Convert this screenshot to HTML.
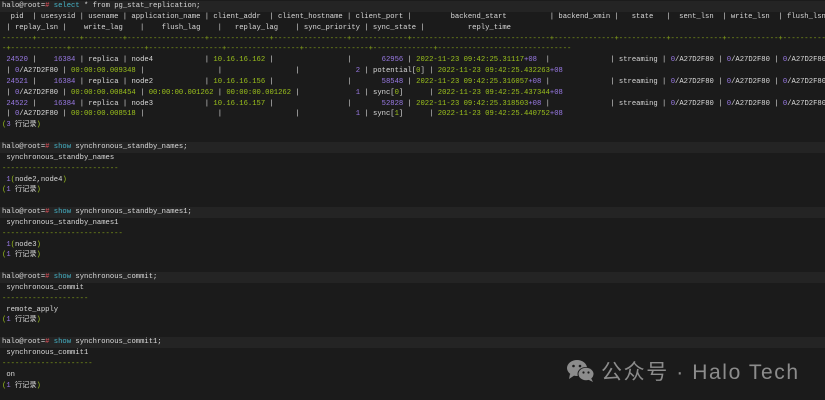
<!DOCTYPE html>
<html><head><meta charset="utf-8"><style>
html,body{margin:0;padding:0;background:#1b1b1b;width:825px;height:400px;overflow:hidden}
pre{margin:0;padding:1px 0 0 2px;font-family:"Liberation Mono","Noto Sans CJK SC",monospace;font-size:7.2px;line-height:10.85px;color:#dadada;white-space:pre;overflow:hidden;width:823px}
.l{display:block;height:10.85px;overflow:hidden}
.p{background:#242424;width:825px;margin-left:-2px;padding-left:2px}
.r{color:#e0505a}.k{color:#45b4c8}.g{color:#9cc21c}.d{color:#8aa818}.u{color:#9a7ae6}
.wm{position:absolute;left:566px;top:356px;display:flex;align-items:center;color:#8c8c8c;font-family:"Liberation Sans","Noto Sans CJK SC",sans-serif;font-size:21px;letter-spacing:1.6px}
</style></head><body>
<pre><span class="l p">halo@root=<span class="r">#</span> <span class="k">select</span> * from pg_stat_replication;</span><span class="l">  pid  | usesysid | usename | application_name | client_addr  | client_hostname | client_port |         backend_start          | backend_xmin |   state   |  sent_lsn  | write_lsn  | flush_lsn</span><span class="l"> | replay_lsn |    write_lag    |    flush_lag    |   replay_lag    | sync_priority | sync_state |          reply_time</span><span class="l d">-------+----------+---------+------------------+--------------+-----------------+-------------+--------------------------------+--------------+-----------+------------+------------+-----------</span><span class="l d">-+-------------+-----------------+-----------------+-----------------+---------------+--------------+-------------------------------</span><span class="l"> <span class="u">24520</span> |    <span class="u">16384</span> | replica | node4            | <span class="g">10.16.16.162</span> |                 |       <span class="u">62956</span> | <span class="g">2022-11-23 09:42:25.31117</span><span class="u">+08</span>  |              | streaming | <span class="u">0</span>/A27D2F80 | <span class="u">0</span>/A27D2F80 | <span class="u">0</span>/A27D2F80</span><span class="l"> | <span class="u">0</span>/A27D2F80 | <span class="g">00:00:00.009348</span> |                 |                 |             <span class="u">2</span> | potential[<span class="g">0</span>] | <span class="g">2022-11-23 09:42:25.432263</span><span class="u">+08</span></span><span class="l"> <span class="u">24521</span> |    <span class="u">16384</span> | replica | node2            | <span class="g">10.16.16.156</span> |                 |       <span class="u">58548</span> | <span class="g">2022-11-23 09:42:25.316057</span><span class="u">+08</span> |              | streaming | <span class="u">0</span>/A27D2F80 | <span class="u">0</span>/A27D2F80 | <span class="u">0</span>/A27D2F80</span><span class="l"> | <span class="u">0</span>/A27D2F80 | <span class="g">00:00:00.008454</span> | <span class="g">00:00:00.001262</span> | <span class="g">00:00:00.001262</span> |             <span class="u">1</span> | sync[<span class="g">0</span>]      | <span class="g">2022-11-23 09:42:25.437344</span><span class="u">+08</span></span><span class="l"> <span class="u">24522</span> |    <span class="u">16384</span> | replica | node3            | <span class="g">10.16.16.157</span> |                 |       <span class="u">52828</span> | <span class="g">2022-11-23 09:42:25.318503</span><span class="u">+08</span> |              | streaming | <span class="u">0</span>/A27D2F80 | <span class="u">0</span>/A27D2F80 | <span class="u">0</span>/A27D2F80</span><span class="l"> | <span class="u">0</span>/A27D2F80 | <span class="g">00:00:00.008518</span> |                 |                 |             <span class="u">1</span> | sync[<span class="g">1</span>]      | <span class="g">2022-11-23 09:42:25.440752</span><span class="u">+08</span></span><span class="l"><span class="g">(</span><span class="u">3</span> 行记录<span class="g">)</span></span><span class="l"> </span><span class="l p">halo@root=<span class="r">#</span> <span class="k">show</span> synchronous_standby_names;</span><span class="l"> synchronous_standby_names</span><span class="l d">---------------------------</span><span class="l"> <span class="u">1</span><span class="g">(</span>node2,node4<span class="g">)</span></span><span class="l"><span class="g">(</span><span class="u">1</span> 行记录<span class="g">)</span></span><span class="l"> </span><span class="l p">halo@root=<span class="r">#</span> <span class="k">show</span> synchronous_standby_names1;</span><span class="l"> synchronous_standby_names1</span><span class="l d">----------------------------</span><span class="l"> <span class="u">1</span><span class="g">(</span>node3<span class="g">)</span></span><span class="l"><span class="g">(</span><span class="u">1</span> 行记录<span class="g">)</span></span><span class="l"> </span><span class="l p">halo@root=<span class="r">#</span> <span class="k">show</span> synchronous_commit;</span><span class="l"> synchronous_commit</span><span class="l d">--------------------</span><span class="l"> remote_apply</span><span class="l"><span class="g">(</span><span class="u">1</span> 行记录<span class="g">)</span></span><span class="l"> </span><span class="l p">halo@root=<span class="r">#</span> <span class="k">show</span> synchronous_commit1;</span><span class="l"> synchronous_commit1</span><span class="l d">---------------------</span><span class="l"> on</span><span class="l"><span class="g">(</span><span class="u">1</span> 行记录<span class="g">)</span></span></pre>
<div class="wm"><svg width="30" height="24" viewBox="0 0 30 24"><ellipse cx="11" cy="9" rx="10" ry="8" fill="#8c8c8c"/><path d="M4 15 L3 20 L9 16Z" fill="#8c8c8c"/><circle cx="7.5" cy="7" r="1.3" fill="#1b1b1b"/><circle cx="14" cy="7" r="1.3" fill="#1b1b1b"/><ellipse cx="20" cy="15" rx="8.5" ry="7" fill="#1b1b1b"/><ellipse cx="20" cy="15" rx="7.5" ry="6.2" fill="#8c8c8c"/><path d="M25 19 L27 23 L22 20.5Z" fill="#8c8c8c"/><circle cx="17.5" cy="13.5" r="1.1" fill="#1b1b1b"/><circle cx="22.5" cy="13.5" r="1.1" fill="#1b1b1b"/></svg><span style="margin-left:5px">公众号 · Halo Tech</span></div>
</body></html>
